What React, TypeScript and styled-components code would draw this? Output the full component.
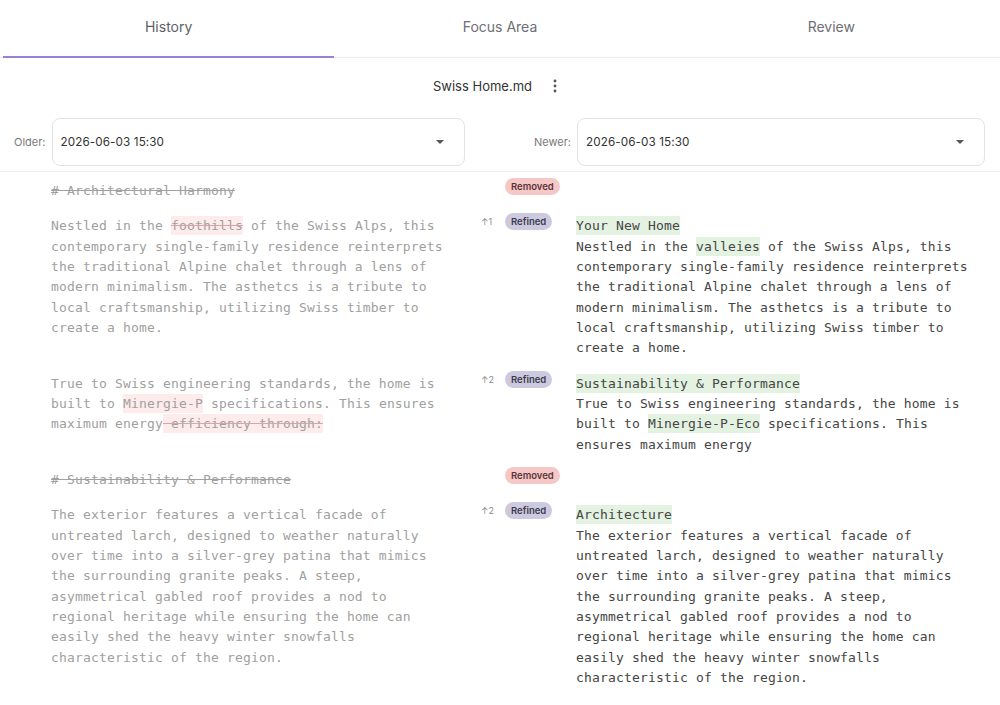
import React from 'react';
import styled, { createGlobalStyle } from 'styled-components';

const GlobalStyle = createGlobalStyle`
  body {
    margin: 0;
    background: #ffffff;
    font-family: Inter, 'Noto Sans', sans-serif;
  }
`;

type Seg = { text: string; mark?: 'del' | 'delStrike' | 'add' };

interface DiffRowData {
  kind: 'removed' | 'refined';
  move?: string;
  left: { heading?: boolean; segs: Seg[] };
  right?: { title: string; segs: Seg[] };
}

const rows: DiffRowData[] = [
  {
    kind: 'removed',
    left: { heading: true, segs: [{ text: '# Architectural Harmony' }] },
  },
  {
    kind: 'refined',
    move: '1',
    left: {
      segs: [
        { text: 'Nestled in the ' },
        { text: 'foothills', mark: 'delStrike' },
        {
          text:
            ' of the Swiss Alps, this contemporary single-family residence reinterprets the traditional Alpine chalet through a lens of modern minimalism. The asthetcs is a tribute to local craftsmanship, utilizing Swiss timber to create a home.',
        },
      ],
    },
    right: {
      title: 'Your New Home',
      segs: [
        { text: 'Nestled in the ' },
        { text: 'valleies', mark: 'add' },
        {
          text:
            ' of the Swiss Alps, this contemporary single-family residence reinterprets the traditional Alpine chalet through a lens of modern minimalism. The asthetcs is a tribute to local craftsmanship, utilizing Swiss timber to create a home.',
        },
      ],
    },
  },
  {
    kind: 'refined',
    move: '2',
    left: {
      segs: [
        { text: 'True to Swiss engineering standards, the home is built to ' },
        { text: 'Minergie-P', mark: 'del' },
        { text: ' specifications. This ensures maximum energy' },
        { text: ' efficiency through:', mark: 'delStrike' },
      ],
    },
    right: {
      title: 'Sustainability & Performance',
      segs: [
        { text: 'True to Swiss engineering standards, the home is built to ' },
        { text: 'Minergie-P-Eco', mark: 'add' },
        { text: ' specifications. This ensures maximum energy' },
      ],
    },
  },
  {
    kind: 'removed',
    left: { heading: true, segs: [{ text: '# Sustainability & Performance' }] },
  },
  {
    kind: 'refined',
    move: '2',
    left: {
      segs: [
        {
          text:
            'The exterior features a vertical facade of untreated larch, designed to weather naturally over time into a silver-grey patina that mimics the surrounding granite peaks. A steep, asymmetrical gabled roof provides a nod to regional heritage while ensuring the home can easily shed the heavy winter snowfalls characteristic of the region.',
        },
      ],
    },
    right: {
      title: 'Architecture',
      segs: [
        {
          text:
            'The exterior features a vertical facade of untreated larch, designed to weather naturally over time into a silver-grey patina that mimics the surrounding granite peaks. A steep, asymmetrical gabled roof provides a nod to regional heritage while ensuring the home can easily shed the heavy winter snowfalls characteristic of the region.',
        },
      ],
    },
  },
];

const tabs = ['History', 'Focus Area', 'Review'];

const renderSegs = (segs: Seg[]) =>
  segs.map((s, j) =>
    s.mark ? (
      <Mark key={j} $mark={s.mark}>
        {s.text}
      </Mark>
    ) : (
      <React.Fragment key={j}>{s.text}</React.Fragment>
    )
  );

const App = () => {
  return (
    <Page>
      <GlobalStyle />
      <TabBar>
        {tabs.map((t, i) => (
          <Tab key={t} $active={i === 0}>
            {t}
          </Tab>
        ))}
      </TabBar>

      <FileRow>
        <FileName>Swiss Home.md</FileName>
        <IconButton aria-label="more">
          <svg width="4" height="14" viewBox="0 0 4 14">
            <circle cx="2" cy="2" r="1.4" fill="#555" />
            <circle cx="2" cy="7" r="1.4" fill="#555" />
            <circle cx="2" cy="12" r="1.4" fill="#555" />
          </svg>
        </IconButton>
      </FileRow>

      <SelectRow>
        <SelectGroup>
          <SelectLabel>Older:</SelectLabel>
          <SelectBox>
            <span>2026-06-03 15:30</span>
            <Caret />
          </SelectBox>
        </SelectGroup>
        <SelectGroup>
          <SelectLabel>Newer:</SelectLabel>
          <SelectBox>
            <span>2026-06-03 15:30</span>
            <Caret />
          </SelectBox>
        </SelectGroup>
      </SelectRow>

      <DiffList>
        {rows.map((row, i) => (
          <DiffRow key={i}>
            <OldText $heading={row.left.heading}>{renderSegs(row.left.segs)}</OldText>
            <Gutter>
              <MoveNum>{row.move ? `\u2191${row.move}` : ''}</MoveNum>
              <Badge $kind={row.kind}>
                {row.kind === 'removed' ? 'Removed' : 'Refined'}
              </Badge>
            </Gutter>
            <NewText>
              {row.right && (
                <>
                  <Mark $mark="add">{row.right.title}</Mark>
                  <br />
                  {renderSegs(row.right.segs)}
                </>
              )}
            </NewText>
          </DiffRow>
        ))}
      </DiffList>
    </Page>
  );
};
export default App;

const Page = styled.div`
  width: 1000px;
  min-height: 705px;
  background: #fff;
`;

const TabBar = styled.div`
  display: grid;
  grid-template-columns: repeat(3, 1fr);
  padding: 0 3px;
  border-bottom: 1px solid #ececec;
`;

const Tab = styled.div<{ $active?: boolean }>`
  height: 58px;
  box-sizing: border-box;
  display: flex;
  align-items: center;
  justify-content: center;
  padding-bottom: 3px;
  font-size: 14px;
  color: ${(p) => (p.$active ? '#5e5e68' : '#6e6e76')};
  border-bottom: 2px solid ${(p) => (p.$active ? '#9a7fd6' : 'transparent')};
  margin-bottom: -1px;
`;

const FileRow = styled.div`
  height: 40px;
  margin-top: 8px;
  display: flex;
  align-items: center;
  justify-content: center;
  gap: 11px;
`;

const FileName = styled.div`
  font-size: 13px;
  color: #333;
`;

const IconButton = styled.div`
  width: 24px;
  height: 28px;
  display: flex;
  align-items: center;
  justify-content: center;
`;

const SelectRow = styled.div`
  margin-top: 12px;
  padding: 0 15px 5px 14px;
  display: flex;
  justify-content: space-between;
  border-bottom: 1px solid #eeeeee;
`;

const SelectGroup = styled.div`
  width: 451px;
  display: flex;
  align-items: center;
  gap: 6px;
`;

const SelectLabel = styled.div`
  font-size: 11px;
  color: #7a7a7a;
`;

const SelectBox = styled.div`
  flex: 1;
  height: 48px;
  box-sizing: border-box;
  border: 1px solid #e3e3e6;
  border-radius: 8px;
  display: flex;
  align-items: center;
  justify-content: space-between;
  padding: 0 20px 0 8px;
  font-size: 11.7px;
  color: #333;
  letter-spacing: 0.1px;
`;

const Caret = styled.span`
  width: 0;
  height: 0;
  border-left: 4px solid transparent;
  border-right: 4px solid transparent;
  border-top: 4px solid #555;
`;

const DiffList = styled.div`
  display: flex;
  flex-direction: column;
  gap: 12px;
  padding-top: 6px;
  padding-bottom: 20px;
`;

const DiffRow = styled.div`
  display: grid;
  grid-template-columns: 400px 125px 400px;
  padding-left: 51px;
  align-items: start;
`;

const CodeText = styled.div`
  font-family: 'DejaVu Sans Mono', 'Liberation Mono', monospace;
  font-size: 13px;
  letter-spacing: 0.17px;
  line-height: 20.33px;
  padding-top: 3px;
  white-space: normal;
`;

const OldText = styled(CodeText)<{ $heading?: boolean }>`
  color: #a0a0a0;
  text-decoration: ${(p) => (p.$heading ? 'line-through' : 'none')};
`;

const NewText = styled(CodeText)`
  color: #454545;
`;

const Mark = styled.span<{ $mark?: 'del' | 'delStrike' | 'add' }>`
  padding: 2px 0;
  background: ${(p) => (p.$mark === 'add' ? '#e3f2e1' : '#fdeceb')};
  text-decoration: ${(p) => (p.$mark === 'delStrike' ? 'line-through' : 'inherit')};
  text-decoration-color: #d9a5a5;
`;

const Gutter = styled.div`
  display: flex;
  align-items: center;
  padding-left: 30px;
`;

const MoveNum = styled.div`
  width: 24px;
  font-size: 9px;
  color: #8a8a8a;
`;

const Badge = styled.div<{ $kind: 'removed' | 'refined' }>`
  height: 17px;
  padding: 0 6px;
  border-radius: 9px;
  display: flex;
  align-items: center;
  font-size: 9.5px;
  font-weight: 600;
  color: ${(p) => (p.$kind === 'removed' ? '#5a3434' : '#3b3a4d')};
  background: ${(p) => (p.$kind === 'removed' ? '#f6c7c7' : '#cdcadf')};
`;
